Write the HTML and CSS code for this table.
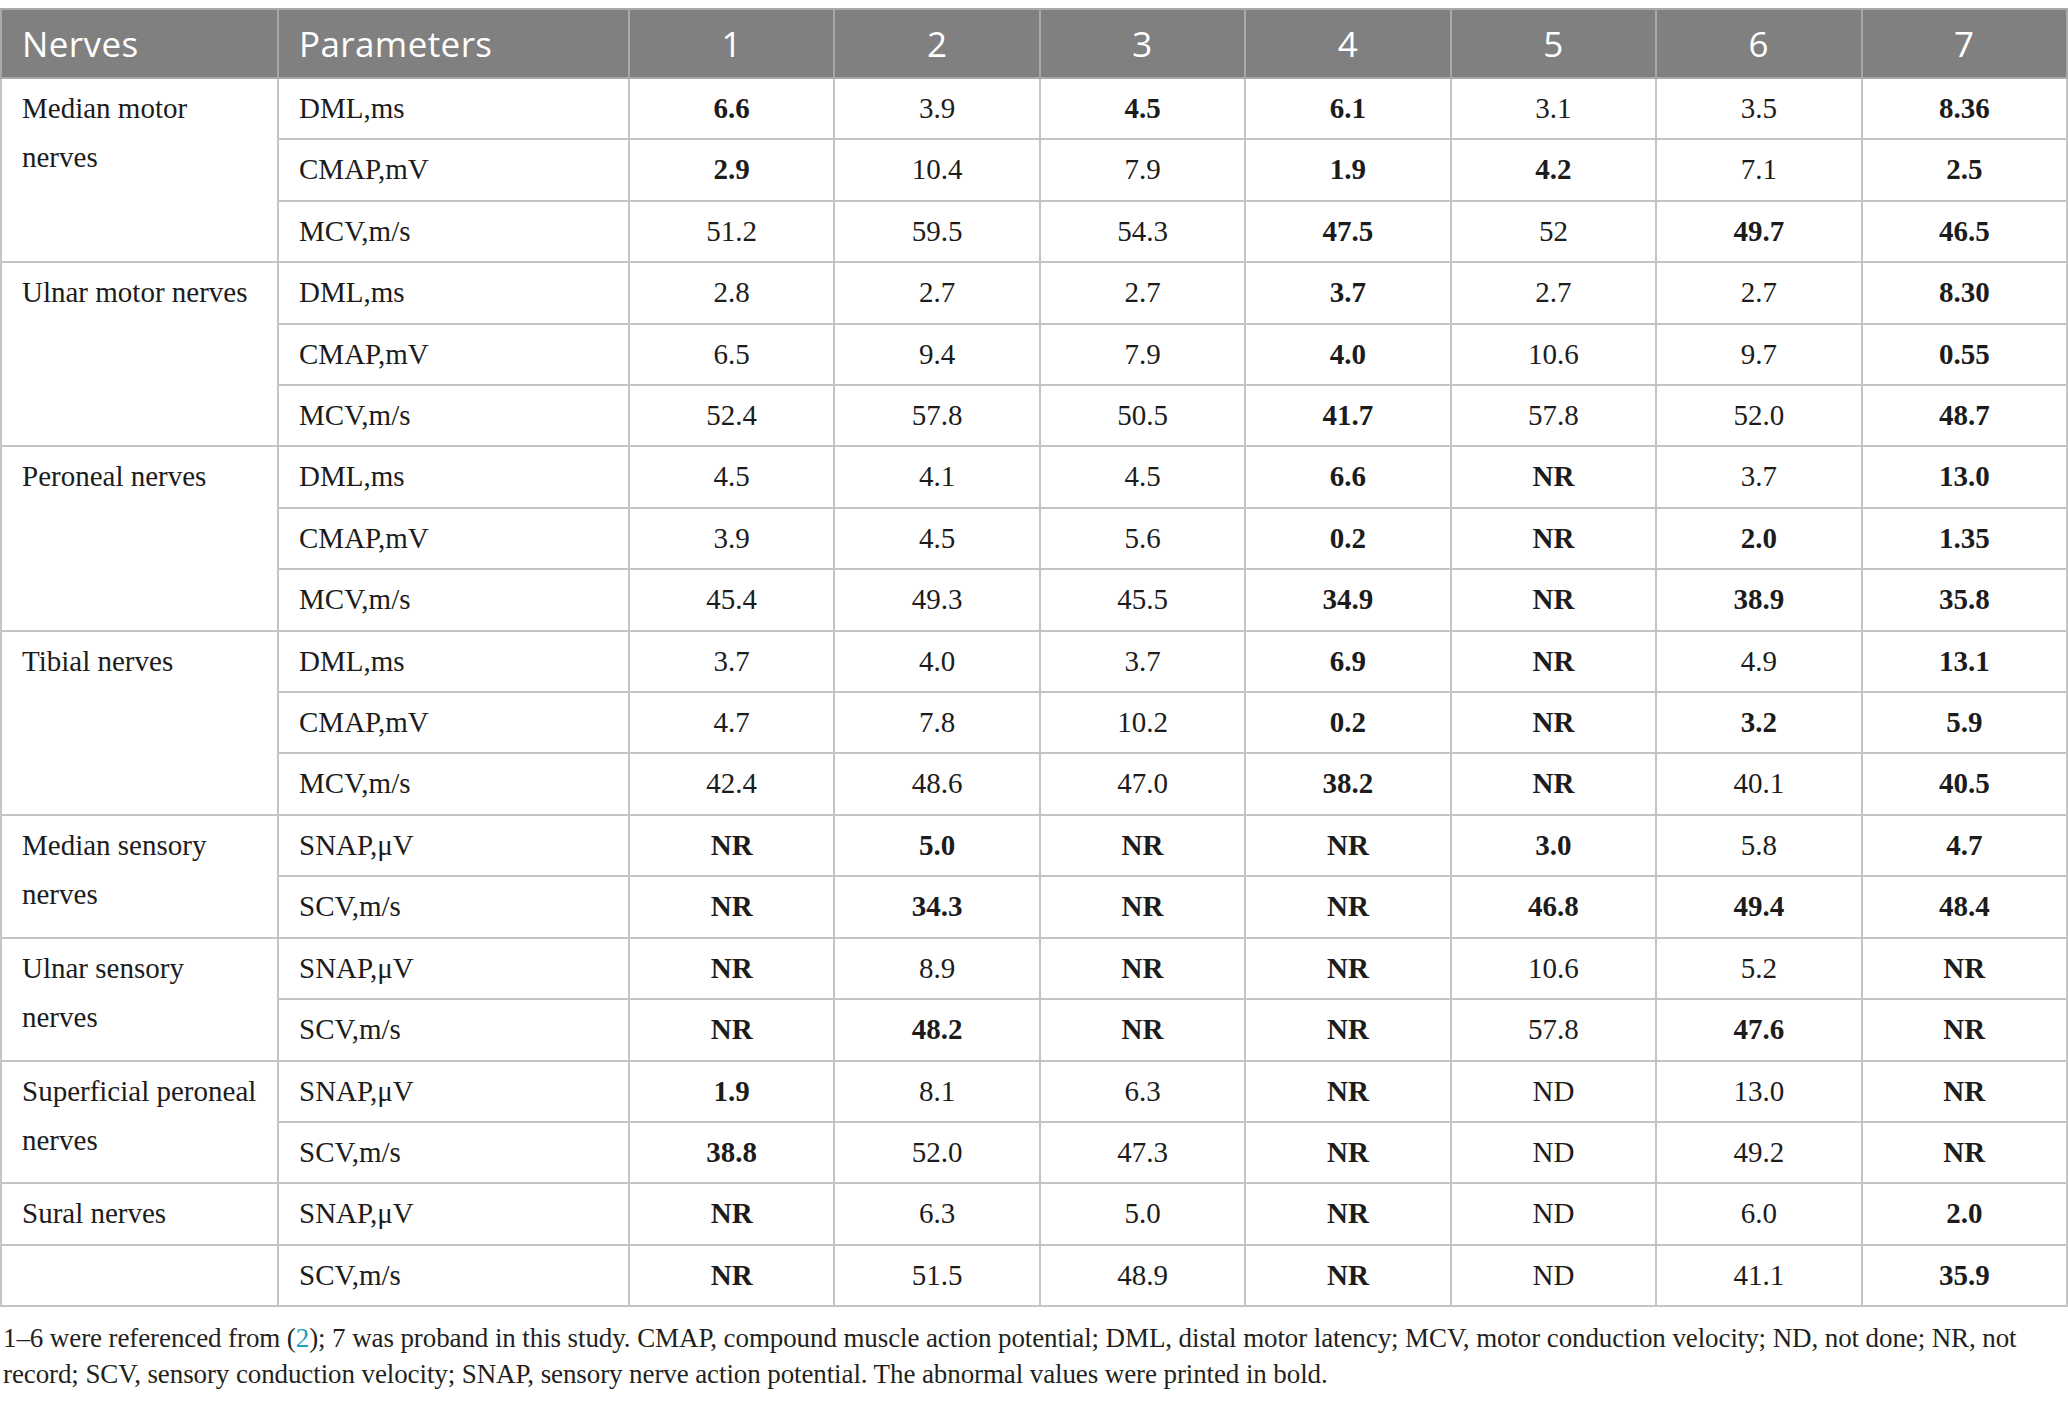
FILE: index.html
```html
<!DOCTYPE html>
<html>

<head>
	<title>Nerve conduction studies</title>
	<link rel="stylesheet" href="styles.css">
</head>

<body>
	<table class="ncs-table">
		<colgroup>
			<col class="col-nerve">
			<col class="col-param">
			<col span="7" class="col-case">
		</colgroup>
		<thead>
			<tr>
				<th class="left">Nerves</th>
				<th class="left">Parameters</th>
				<th>1</th>
				<th>2</th>
				<th>3</th>
				<th>4</th>
				<th>5</th>
				<th>6</th>
				<th>7</th>
			</tr>
		</thead>
		<tbody>
			<tr>
				<td class="nerve" rowspan="3">Median motor nerves</td>
				<td class="param">DML,ms</td>
				<td><b>6.6</b></td><td>3.9</td><td><b>4.5</b></td><td><b>6.1</b></td><td>3.1</td><td>3.5</td><td><b>8.36</b></td>
			</tr>
			<tr>
				<td class="param">CMAP,mV</td>
				<td><b>2.9</b></td><td>10.4</td><td>7.9</td><td><b>1.9</b></td><td><b>4.2</b></td><td>7.1</td><td><b>2.5</b></td>
			</tr>
			<tr>
				<td class="param">MCV,m/s</td>
				<td>51.2</td><td>59.5</td><td>54.3</td><td><b>47.5</b></td><td>52</td><td><b>49.7</b></td><td><b>46.5</b></td>
			</tr>

			<tr>
				<td class="nerve" rowspan="3">Ulnar motor nerves</td>
				<td class="param">DML,ms</td>
				<td>2.8</td><td>2.7</td><td>2.7</td><td><b>3.7</b></td><td>2.7</td><td>2.7</td><td><b>8.30</b></td>
			</tr>
			<tr>
				<td class="param">CMAP,mV</td>
				<td>6.5</td><td>9.4</td><td>7.9</td><td><b>4.0</b></td><td>10.6</td><td>9.7</td><td><b>0.55</b></td>
			</tr>
			<tr>
				<td class="param">MCV,m/s</td>
				<td>52.4</td><td>57.8</td><td>50.5</td><td><b>41.7</b></td><td>57.8</td><td>52.0</td><td><b>48.7</b></td>
			</tr>

			<tr>
				<td class="nerve" rowspan="3">Peroneal nerves</td>
				<td class="param">DML,ms</td>
				<td>4.5</td><td>4.1</td><td>4.5</td><td><b>6.6</b></td><td><b>NR</b></td><td>3.7</td><td><b>13.0</b></td>
			</tr>
			<tr>
				<td class="param">CMAP,mV</td>
				<td>3.9</td><td>4.5</td><td>5.6</td><td><b>0.2</b></td><td><b>NR</b></td><td><b>2.0</b></td><td><b>1.35</b></td>
			</tr>
			<tr>
				<td class="param">MCV,m/s</td>
				<td>45.4</td><td>49.3</td><td>45.5</td><td><b>34.9</b></td><td><b>NR</b></td><td><b>38.9</b></td><td><b>35.8</b></td>
			</tr>

			<tr>
				<td class="nerve" rowspan="3">Tibial nerves</td>
				<td class="param">DML,ms</td>
				<td>3.7</td><td>4.0</td><td>3.7</td><td><b>6.9</b></td><td><b>NR</b></td><td>4.9</td><td><b>13.1</b></td>
			</tr>
			<tr>
				<td class="param">CMAP,mV</td>
				<td>4.7</td><td>7.8</td><td>10.2</td><td><b>0.2</b></td><td><b>NR</b></td><td><b>3.2</b></td><td><b>5.9</b></td>
			</tr>
			<tr>
				<td class="param">MCV,m/s</td>
				<td>42.4</td><td>48.6</td><td>47.0</td><td><b>38.2</b></td><td><b>NR</b></td><td>40.1</td><td><b>40.5</b></td>
			</tr>

			<tr>
				<td class="nerve" rowspan="2">Median sensory nerves</td>
				<td class="param">SNAP,μV</td>
				<td><b>NR</b></td><td><b>5.0</b></td><td><b>NR</b></td><td><b>NR</b></td><td><b>3.0</b></td><td>5.8</td><td><b>4.7</b></td>
			</tr>
			<tr>
				<td class="param">SCV,m/s</td>
				<td><b>NR</b></td><td><b>34.3</b></td><td><b>NR</b></td><td><b>NR</b></td><td><b>46.8</b></td><td><b>49.4</b></td><td><b>48.4</b></td>
			</tr>

			<tr>
				<td class="nerve" rowspan="2">Ulnar sensory nerves</td>
				<td class="param">SNAP,μV</td>
				<td><b>NR</b></td><td>8.9</td><td><b>NR</b></td><td><b>NR</b></td><td>10.6</td><td>5.2</td><td><b>NR</b></td>
			</tr>
			<tr>
				<td class="param">SCV,m/s</td>
				<td><b>NR</b></td><td><b>48.2</b></td><td><b>NR</b></td><td><b>NR</b></td><td>57.8</td><td><b>47.6</b></td><td><b>NR</b></td>
			</tr>

			<tr>
				<td class="nerve" rowspan="2">Superficial peroneal nerves</td>
				<td class="param">SNAP,μV</td>
				<td><b>1.9</b></td><td>8.1</td><td>6.3</td><td><b>NR</b></td><td>ND</td><td>13.0</td><td><b>NR</b></td>
			</tr>
			<tr>
				<td class="param">SCV,m/s</td>
				<td><b>38.8</b></td><td>52.0</td><td>47.3</td><td><b>NR</b></td><td>ND</td><td>49.2</td><td><b>NR</b></td>
			</tr>

			<tr>
				<td class="nerve">Sural nerves</td>
				<td class="param">SNAP,μV</td>
				<td><b>NR</b></td><td>6.3</td><td>5.0</td><td><b>NR</b></td><td>ND</td><td>6.0</td><td><b>2.0</b></td>
			</tr>
			<tr>
				<td class="nerve"></td>
				<td class="param">SCV,m/s</td>
				<td><b>NR</b></td><td>51.5</td><td>48.9</td><td><b>NR</b></td><td>ND</td><td>41.1</td><td><b>35.9</b></td>
			</tr>
		</tbody>
	</table>

	<p class="table-note">1–6 were referenced from (<span class="ref">2</span>); 7 was proband in this study. CMAP, compound muscle action potential; DML, distal motor latency; MCV, motor conduction velocity; ND, not done; NR, not record; SCV, sensory conduction velocity; SNAP, sensory nerve action potential. The abnormal values were printed in bold.</p>
</body>

</html>
```

FILE: styles.css
```css
body {
	margin: 0;
	padding-top: 8px;
	background-color: #ffffff;
	font-family: "Liberation Serif", "Times New Roman", serif;
	color: #1c1c1c;
}

.ncs-table {
	width: 100%;
	border-collapse: collapse;
	table-layout: fixed;
	border: 2px solid #c4c4c4;
}

.col-nerve {
	width: 277px;
}

.col-param {
	width: 351px;
}

.ncs-table th {
	height: 67px;
	padding: 0 20px;
	background-color: #808080;
	border: 2px solid #a9a9a9;
	color: #ffffff;
	font-family: "Open Sans", "Noto Sans", sans-serif;
	font-size: 35px;
	font-weight: normal;
	letter-spacing: 0.4px;
	text-align: center;
	vertical-align: middle;
}

.ncs-table th.left {
	text-align: left;
}

.ncs-table td {
	padding: 5px 20px;
	border: 2px solid #c4c4c4;
	font-size: 29px;
	line-height: 49.4px;
	text-align: center;
	vertical-align: middle;
	white-space: nowrap;
}

.ncs-table td.nerve {
	text-align: left;
	vertical-align: top;
	white-space: normal;
}

.ncs-table td.param {
	text-align: left;
}

.ncs-table b {
	font-weight: bold;
}

.table-note {
	margin: 13px 0 0 3px;
	font-size: 27px;
	line-height: 36px;
	letter-spacing: -0.1px;
	color: #231f20;
}

.ref {
	color: #1c9fbf;
}
```
